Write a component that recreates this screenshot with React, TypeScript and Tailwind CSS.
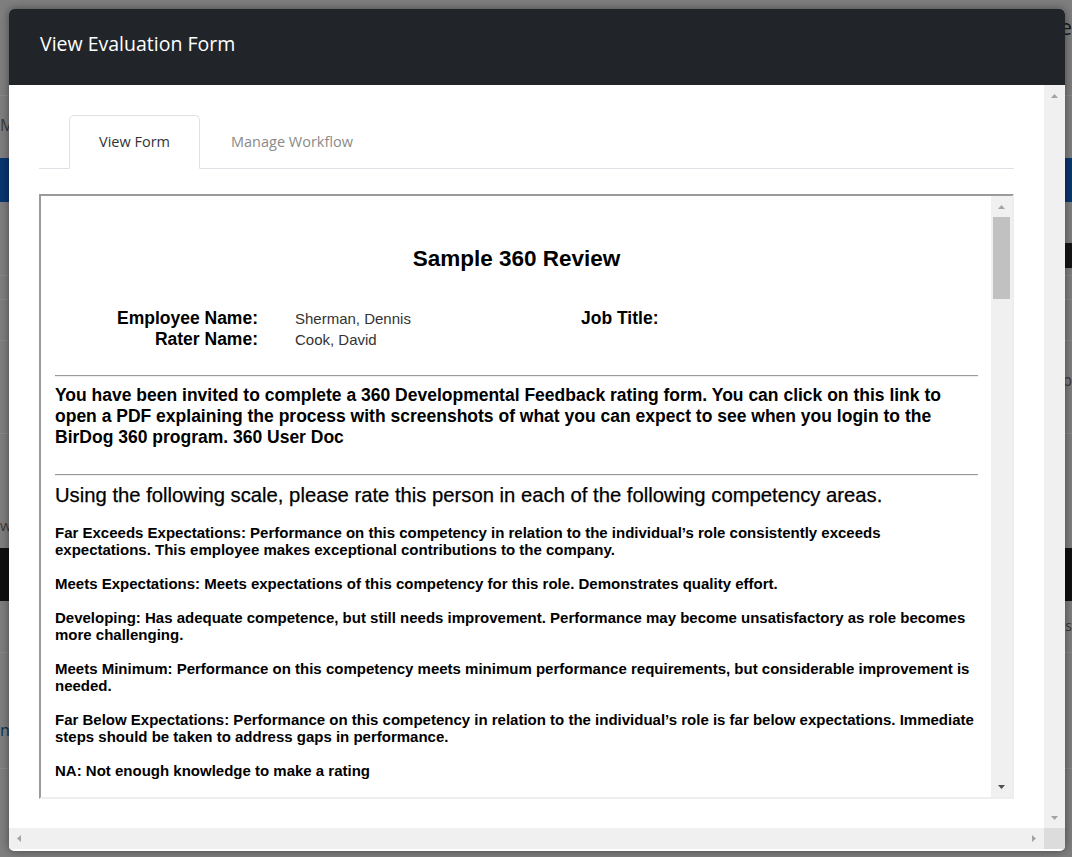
import React from "react";

type Dir = "up" | "down" | "left" | "right";

// small scrollbar arrow glyph
const Arrow = ({ dir, color }: { dir: Dir; color: string }) => {
	const points: Record<Dir, string> = {
		up: "0,4 3.5,0 7,4",
		down: "0,0 3.5,4 7,0",
		left: "4,0 0,3.5 4,7",
		right: "0,0 4,3.5 0,7",
	};
	const vertical = dir === "up" || dir === "down";
	return (
		<svg
			width={vertical ? 7 : 4}
			height={vertical ? 4 : 7}
			viewBox={vertical ? "0 0 7 4" : "0 0 4 7"}
		>
			<polygon points={points[dir]} fill={color} />
		</svg>
	);
};

const scale = [
	"Far Exceeds Expectations: Performance on this competency in relation to the individual’s role consistently exceeds expectations. This employee makes exceptional contributions to the company.",
	"Meets Expectations: Meets expectations of this competency for this role. Demonstrates quality effort.",
	"Developing: Has adequate competence, but still needs improvement. Performance may become unsatisfactory as role becomes more challenging.",
	"Meets Minimum: Performance on this competency meets minimum performance requirements, but considerable improvement is needed.",
	"Far Below Expectations: Performance on this competency in relation to the individual’s role is far below expectations. Immediate steps should be taken to address gaps in performance.",
	"NA: Not enough knowledge to make a rating",
];

// the page sitting behind the dimmed backdrop
const Backdrop = () => (
	<div className="flex h-full flex-col text-[#1a1a1a]">
		<div className="flex h-[96px] shrink-0 justify-end border-b border-[#8a8a8a] pt-[15px]">
			<span className="text-[22px] leading-none">Home</span>
		</div>
		<div className="flex h-[62px] shrink-0 items-center pb-[4px]">
			<span className="text-[16px] text-[#3a3a3a]">Manage</span>
		</div>
		<div className="h-[44px] shrink-0 bg-[#0a3670]" />
		<div className="h-[41px] shrink-0" />
		<div className="flex h-[25px] shrink-0 justify-end">
			<div className="w-[60px] bg-[#151515]" />
		</div>
		<div className="h-[8px] shrink-0 border-b border-[#8a8a8a]" />
		<div className="h-[24px] shrink-0 border-b border-[#8a8a8a]" />
		<div className="h-[41px] shrink-0 border-b border-[#8a8a8a]" />
		<div className="flex h-[77px] shrink-0 items-center justify-end">
			<span className="text-[16px] text-[#3a3a3a]">Setup</span>
		</div>
		<div className="h-[16px] shrink-0 border-b border-[#8a8a8a]" />
		<div className="flex h-[114px] shrink-0 items-end pb-[12px]">
			<span className="text-[15px] text-[#3a3a3a]">workflow</span>
		</div>
		<div className="h-[53px] shrink-0 bg-[#101010]" />
		<div className="flex h-[52px] shrink-0 justify-end border-b border-[#8a8a8a] pt-[14px]">
			<span className="text-[14px] text-[#3a3a3a]">Reports</span>
		</div>
		<div className="flex h-[116px] shrink-0 items-end border-b border-[#8a8a8a] pb-[26px]">
			<span className="text-[16px] text-[#0b2f5c]">next</span>
		</div>
	</div>
);

const EvaluationForm = () => (
	<div className="min-w-0 flex-1 overflow-hidden pl-[14px] pr-[13px] font-['Liberation_Sans',Arial,sans-serif] text-black">
		<h2 className="pt-[50px] text-center text-[22.5px] font-bold leading-[26px]">
			Sample 360 Review
		</h2>

		<div className="mt-[36px] grid grid-cols-[203px_323px_auto] leading-[21px]">
			<div className="text-right text-[17.5px] font-bold">Employee Name:</div>
			<div className="pl-[37px] text-[15px] text-[#333]">Sherman, Dennis</div>
			<div className="text-[17.5px] font-bold">Job Title:</div>
			<div className="text-right text-[17.5px] font-bold">Rater Name:</div>
			<div className="pl-[37px] text-[15px] text-[#333]">Cook, David</div>
			<div />
		</div>

		<hr className="mt-[25px] border-t border-b border-t-[#9a9a9a] border-b-[#eeeeee]" />

		<p className="mt-[8px] text-[17.5px] font-bold leading-[21px]">
			You have been invited to complete a 360 Developmental Feedback rating form. You
			can click on this link to open a PDF explaining the process with screenshots of
			what you can expect to see when you login to the BirDog 360 program. 360 User Doc
		</p>

		<hr className="mt-[26px] border-t border-b border-t-[#9a9a9a] border-b-[#eeeeee]" />

		<h3 className="mt-[8px] text-[20.25px] leading-[22px] [-webkit-text-stroke:0.25px_black]">
			Using the following scale, please rate this person in each of the following
			competency areas.
		</h3>

		<div className="mt-[18px] flex flex-col gap-[17px]">
			{scale.map((line) => (
				<p key={line} className="text-[15px] font-bold leading-[17px]">
					{line}
				</p>
			))}
		</div>
	</div>
);

export default function App() {
	return (
		<div className="relative h-[857px] w-[1072px] overflow-hidden bg-[#7f7f7f] font-['Open_Sans',sans-serif]">
			<Backdrop />

			{/* modal */}
			<div className="absolute left-[9px] top-[9px] flex h-[842px] w-[1056px] flex-col overflow-hidden rounded-[5px] bg-white shadow-[0_0_10px_rgba(0,0,0,0.45)]">
				<div className="flex h-[76px] shrink-0 items-center bg-[#212529] px-[31px] pb-[6px]">
					<h5 className="text-[19.5px] text-white">View Evaluation Form</h5>
				</div>

				<div className="flex min-h-0 flex-1">
					<div className="min-w-0 flex-1 px-[30px] pt-[30px]">
						{/* tabs */}
						<div className="flex h-[54px] border-b border-[#dee2e6] text-[14.5px]">
							<div className="-mb-px ml-[30px] flex w-[131px] items-center justify-center rounded-t-[5px] border border-[#dee2e6] border-b-white text-[#333]">
								View Form
							</div>
							<div className="flex items-center px-[31px] text-[#8a8a8a]">
								Manage Workflow
							</div>
						</div>

						{/* form frame */}
						<div className="mt-[25px] flex h-[605px] border-2 border-t-[#9a9a9a] border-l-[#9a9a9a] border-r-[#eeeeee] border-b-[#eeeeee]">
							<EvaluationForm />
							<div className="flex w-[21px] shrink-0 flex-col bg-[#f0f0f0]">
								<div className="flex h-[21px] items-center justify-center">
									<Arrow dir="up" color="#a3a3a3" />
								</div>
								<div className="mx-[2px] h-[82px] bg-[#c1c1c1]" />
								<div className="flex-1" />
								<div className="flex h-[21px] items-center justify-center">
									<Arrow dir="down" color="#505050" />
								</div>
							</div>
						</div>
					</div>

					{/* modal vertical scrollbar */}
					<div className="flex w-[21px] shrink-0 flex-col justify-between bg-[#f0f0f0]">
						<div className="flex h-[21px] items-center justify-center">
							<Arrow dir="up" color="#a3a3a3" />
						</div>
						<div className="flex h-[21px] items-center justify-center">
							<Arrow dir="down" color="#a3a3a3" />
						</div>
					</div>
				</div>

				{/* modal horizontal scrollbar */}
				<div className="flex h-[21px] shrink-0">
					<div className="flex flex-1 items-center justify-between bg-[#f0f0f0] px-[8px]">
						<Arrow dir="left" color="#a3a3a3" />
						<Arrow dir="right" color="#a3a3a3" />
					</div>
					<div className="w-[21px] bg-[#dcdcdc]" />
				</div>
				<div className="h-[2px] shrink-0" />
			</div>
		</div>
	);
}
